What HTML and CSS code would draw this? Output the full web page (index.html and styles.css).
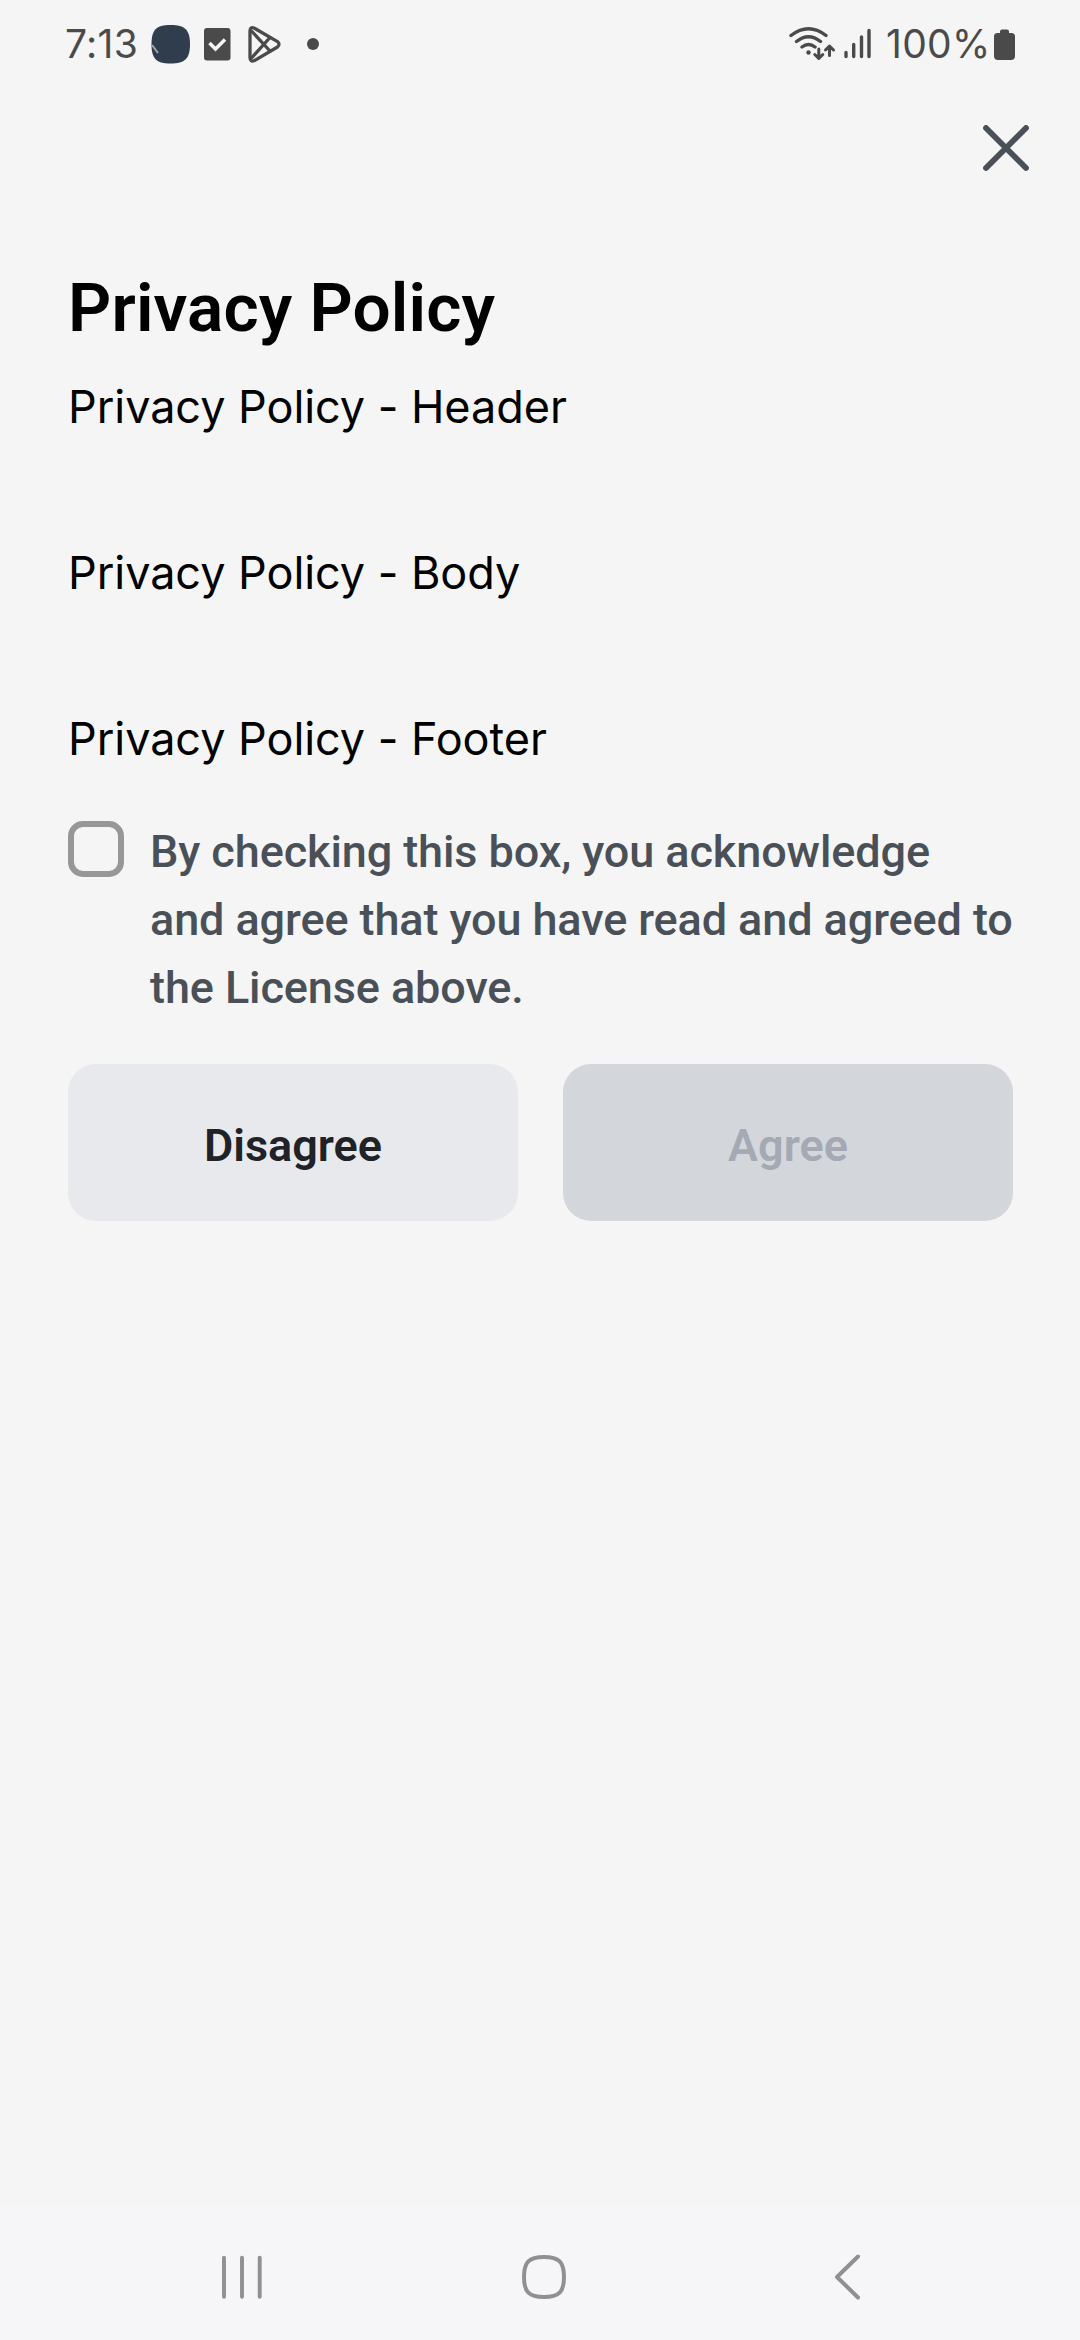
FILE: index.html
```html
<!DOCTYPE html>
<html lang="en">
<head>
<meta charset="utf-8">
<title>Privacy Policy</title>
<link rel="stylesheet" href="styles.css">
</head>
<body>
<div class="screen">
  <header class="status">
    <span class="status-text clock">7:13</span>
    <svg class="notifications" width="176" height="50" viewBox="148 20 176 50">
      <path d="M170.500 25C185 25 190 30 190 44.300S185 63.600 170.500 63.600 151.500 58.500 151.500 44.300 156 25 170.500 25Z" fill="#2f3d4d"/>
      <path d="M152 45l6 8" stroke="#a0a8aa" stroke-width="2"/>
      <rect x="204" y="28" width="26.500" height="32.500" rx="3" fill="#4a4a4a"/>
      <path d="M209.500 43l6 6 9.500-9.500" fill="none" stroke="#f5f5f5" stroke-width="3.500"/>
      <g fill="none" stroke="#4a4a4a" stroke-width="3.300" stroke-linejoin="round">
        <path d="M250 31v26.500q0 5 4.500 3l23-13.500q3-2.700 0-5.400l-23-13.300q-4.500-2-4.500 2.700Z"/>
        <path d="M251 30.500l19 20.500M251 58.500l19-21"/>
      </g>
      <circle cx="313" cy="44" r="6" fill="#4a4a4a"/>
    </svg>
    <svg class="signals" width="90" height="50" viewBox="786 20 90 50">
      <g fill="none" stroke="#4a4a4a" stroke-width="3.400" stroke-linecap="round" stroke-linejoin="round">
        <path d="M791 35.500q17.500-13.500 35 0M796.500 41.500q12-9.500 24 0M802 47q6.500-5 13 0"/>
        <path stroke-width="3" d="M818.800 49v9M814.800 54.500l4 4 4-4M829.500 55.500v-9M825.500 50l4-4 4 4"/>
        <path d="M846 52.500v4M853.700 44.500v12M861.500 37v19.500M869 30.500v26"/>
      </g>
      <circle cx="808.500" cy="52.500" r="2.200" fill="#4a4a4a"/>
    </svg>
    <span class="status-text percent">100%</span>
    <svg class="battery" width="21" height="31" viewBox="994 28 21 31">
      <path d="M1000 32v-1.500q0-2 2-2h5q2 0 2 2V32h2.500q3.500 0 3.500 3.500V55q0 4-4 4h-13q-4 0-4-4V35.500q0-3.500 3.500-3.500Z" fill="#4a4a4a"/>
    </svg>
  </header>

  <div class="toolbar">
    <button class="close" aria-label="Close">
      <svg width="46" height="46" viewBox="0 0 46 46"><path d="M3 3l40 40M43 3L3 43" stroke="#495057" stroke-width="5.800" stroke-linecap="round"/></svg>
    </button>
  </div>

  <main class="content">
    <h1 class="title">Privacy Policy</h1>
    <div class="policy">
      <p>Privacy Policy - Header</p>
      <p>Privacy Policy - Body</p>
      <p>Privacy Policy - Footer</p>
    </div>
    <label class="consent">
      <input class="checkbox" type="checkbox">
      <span class="consent-text">By checking this box, you acknowledge<br>and agree that you have read and agreed to<br>the License above.</span>
    </label>
    <div class="actions">
      <button class="action">Disagree</button>
      <button class="action action-disabled">Agree</button>
    </div>
  </main>

  <nav class="navbar">
    <svg width="40" height="48" viewBox="222 2253 40 48"><path d="M224 2257.700v39M242 2257.700v39M259.700 2257.700v39" stroke="#909090" stroke-width="3.900" stroke-linecap="round"/></svg>
    <svg class="home" width="44" height="44" viewBox="522 2255 44 44"><path d="M544 2257C559 2257 564 2262 564 2277S559 2297 544 2297 524 2292 524 2277 529 2257 544 2257Z" fill="none" stroke="#909090" stroke-width="4"/></svg>
    <svg width="26" height="48" viewBox="834 2253 26 48"><path d="M858 2256.500L837 2277l21 20.500" fill="none" stroke="#909090" stroke-width="4" stroke-linecap="round" stroke-linejoin="round"/></svg>
  </nav>
</div>
</body>
</html>
```

FILE: styles.css
```css
* { box-sizing: border-box; }
body { margin: 0; background: #f5f5f5; }
button { border: 0; padding: 0; background: none; }
svg { display: block; flex: none; }

.screen {
  width: 1080px;
  height: 2340px;
  display: flex;
  flex-direction: column;
  background: #f5f5f5;
  font-family: Roboto, sans-serif;
}

.status {
  height: 88px;
  display: flex;
  align-items: center;
  padding: 0 65px;
}
.status-text {
  font-family: Inter, sans-serif;
  font-size: 39px;
  font-weight: 400;
  line-height: 48px;
  letter-spacing: 0.3px;
  color: #4a4a4a;
  white-space: nowrap;
}
.clock { width: 83px; }
.notifications { margin-top: 2px; }
.signals { margin: 2px 0 0 auto; }
.percent { width: 108px; padding-left: 10px; }
.battery { margin-left: 10px; }

.toolbar {
  height: 120px;
  display: flex;
  justify-content: flex-end;
  padding: 37px 51px 0 0;
}
.close { width: 46px; height: 46px; }

.content {
  flex: 1;
  padding: 60px 67px 0 68px;
}
.title {
  margin: 0;
  font-size: 67.5px;
  font-weight: 600;
  line-height: 80px;
  letter-spacing: 0.15px;
  color: #000;
}
.policy {
  display: grid;
  gap: 98px;
  margin-top: 25px;
  font-family: Inter, sans-serif;
  font-size: 45px;
  font-weight: 400;
  font-feature-settings: "calt" 0;
  letter-spacing: -0.05px;
  line-height: 68px;
  color: #000;
}
.policy p { margin: 0; }

.consent {
  display: flex;
  gap: 26px;
  margin-top: 45px;
}
.checkbox {
  appearance: none;
  flex: none;
  width: 56px;
  height: 56px;
  margin: 3px 0 0;
  border: 6px solid #979797;
  border-radius: 15px;
}
.consent-text {
  font-size: 45px;
  font-weight: 500;
  line-height: 68px;
  letter-spacing: -0.1px;
  color: #495057;
  white-space: nowrap;
}

.actions {
  display: grid;
  grid-template-columns: 1fr 1fr;
  gap: 45px;
  margin-top: 42px;
}
.action {
  height: 157px;
  padding-top: 6px;
  border-radius: 28px;
  background: #e7e9ed;
  color: #212227;
  font: 600 45px/68px Roboto, sans-serif;
}
.action-disabled {
  background: #d3d7dc;
  color: #a5a9b3;
}

.navbar {
  height: 136px;
  display: flex;
  justify-content: space-between;
  align-items: center;
  padding: 10px 220px 0 222px;
  background: #f6f6f9;
}
.home { margin-right: 8px; }
```
